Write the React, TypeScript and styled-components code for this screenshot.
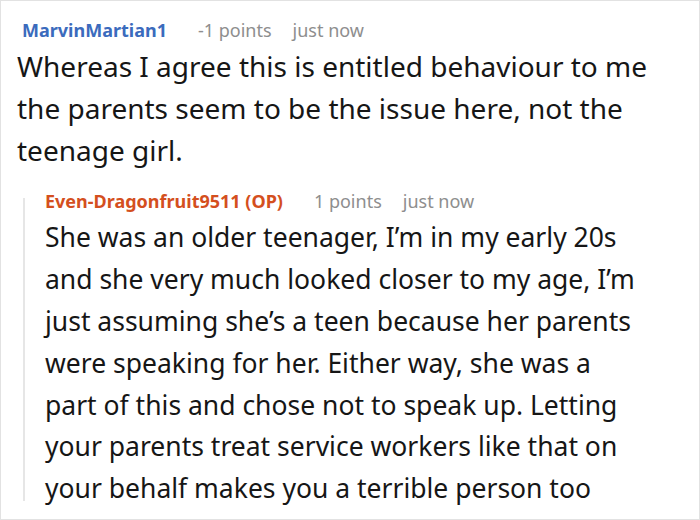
import { createGlobalStyle } from 'styled-components'
import styled from 'styled-components'

const GlobalStyle = createGlobalStyle`
  html, body {
    margin: 0;
    padding: 0;
    background: #ffffff;
  }
  body {
    font-family: 'Noto Sans', 'Open Sans', sans-serif;
  }
`

const Card = styled.div`
  box-sizing: border-box;
  width: 700px;
  height: 520px;
  border: 1px solid #e2e2e2;
  padding: 17px 0 0 16px;
  overflow: hidden;
  background: #fff;
`

const Comment = styled.div`
  display: flex;
  flex-direction: column;
`

const Meta = styled.div<{ indent?: number; lift?: number }>`
  display: flex;
  align-items: baseline;
  gap: 21px;
  padding-left: ${(p) => p.indent ?? 0}px;
  margin-top: ${(p) => -(p.lift ?? 0)}px;
  font-size: 18px;
  line-height: 24px;
`

const Author = styled.span<{ color: string }>`
  font-weight: 700;
  color: ${(p) => p.color};
  margin-right: 10px;
`

const Info = styled.span`
  color: #8e8e8e;
`

const Body = styled.p<{ size: number; tail?: number }>`
  margin: 4px 0 ${(p) => -(p.tail ?? 0)}px 0;
  font-size: ${(p) => p.size}px;
  line-height: 41.8px;
  color: #161616;
  white-space: nowrap;
`

const Reply = styled.div`
  display: flex;
  flex-direction: column;
  margin: 27px 0 0 6px;
  padding-left: 20px;
  border-left: 2px solid #e6e6e6;
`

export default function App() {
  return (
    <>
      <GlobalStyle />
      <Card>
        <Comment>
          <Meta indent={5}>
            <Author color="#3b6bbd">MarvinMartian1</Author>
            <Info>-1 points</Info>
            <Info>just now</Info>
          </Meta>
          <Body size={28}>
            Whereas I agree this is entitled behaviour to me
            <br />
            the parents seem to be the issue here, not the
            <br />
            teenage girl.
          </Body>
        </Comment>
        <Reply>
          <Meta lift={9}>
            <Author color="#d44f1e">Even-Dragonfruit9511 (OP)</Author>
            <Info>1 points</Info>
            <Info>just now</Info>
          </Meta>
          <Body size={26.5} tail={9}>
            She was an older teenager, I’m in my early 20s
            <br />
            and she very much looked closer to my age, I’m
            <br />
            just assuming she’s a teen because her parents
            <br />
            were speaking for her. Either way, she was a
            <br />
            part of this and chose not to speak up. Letting
            <br />
            your parents treat service workers like that on
            <br />
            your behalf makes you a terrible person too
          </Body>
        </Reply>
      </Card>
    </>
  )
}
